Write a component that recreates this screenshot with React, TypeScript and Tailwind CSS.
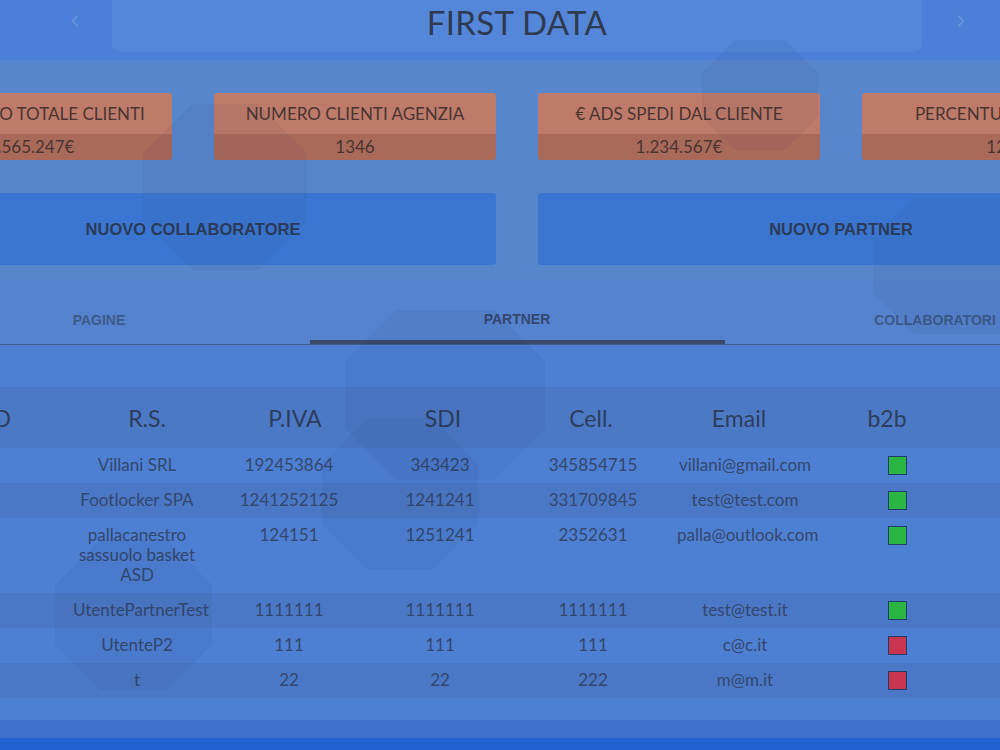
import { ChevronLeft, ChevronRight } from "lucide-react";

const STATS = [
  { label: "FATTURATO TOTALE CLIENTI", value: "4.565.247€" },
  { label: "NUMERO CLIENTI AGENZIA", value: "1346" },
  { label: "€ ADS SPEDI DAL CLIENTE", value: "1.234.567€" },
  { label: "PERCENTUALE MEDIA", value: "12%" },
];

const TABS = ["PAGINE", "PARTNER", "COLLABORATORI"];
const ACTIVE_TAB = 1;

const COLUMNS = ["ID", "R.S.", "P.IVA", "SDI", "Cell.", "Email", "b2b", ""];

const PARTNERS = [
  { id: 1, rs: "Villani SRL", piva: "192453864", sdi: "343423", cell: "345854715", email: "villani@gmail.com", b2b: true },
  { id: 2, rs: "Footlocker SPA", piva: "1241252125", sdi: "1241241", cell: "331709845", email: "test@test.com", b2b: true },
  { id: 3, rs: "pallacanestro sassuolo basket ASD", piva: "124151", sdi: "1251241", cell: "2352631", email: "palla@outlook.com", b2b: true },
  { id: 4, rs: "UtentePartnerTest", piva: "1111111", sdi: "1111111", cell: "1111111", email: "test@test.it", b2b: true },
  { id: 5, rs: "UtenteP2", piva: "111", sdi: "111", cell: "111", email: "c@c.it", b2b: false },
  { id: 6, rs: "t", piva: "22", sdi: "22", cell: "222", email: "m@m.it", b2b: false },
];

const SHAPES = [
  { x: 143, y: 104, w: 164, h: 166 },
  { x: 702, y: 40, w: 116, h: 110 },
  { x: 345, y: 310, w: 200, h: 170 },
  { x: 322, y: 418, w: 156, h: 152 },
  { x: 55, y: 540, w: 157, h: 150 },
  { x: 873, y: 198, w: 170, h: 136 },
];

function octagon({ x, y, w, h }: { x: number; y: number; w: number; h: number }) {
  const c = Math.min(w, h) * 0.3;
  return [
    [x + c, y],
    [x + w - c, y],
    [x + w, y + c],
    [x + w, y + h - c],
    [x + w - c, y + h],
    [x + c, y + h],
    [x, y + h - c],
    [x, y + c],
  ]
    .map((p) => p.join(","))
    .join(" ");
}

export default function App() {
  return (
    <div className="relative w-[1000px] h-[750px] overflow-hidden bg-[#4c7fd3] font-['Lato','Noto_Sans',sans-serif] text-[#32446a]">
      {/* top bar */}
      <div className="flex items-start h-[60px] bg-[#4b7fd8]">
        <div className="w-[112px] h-[42px] flex items-center justify-center pl-[38px]">
          <ChevronLeft size={20} strokeWidth={1.5} className="text-[#6f96dc]" />
        </div>
        <div className="w-[810px] h-[52px] rounded-b-lg bg-[#5487da] flex items-center justify-center">
          <h1 className="text-[33px] leading-none tracking-[0.3px] text-[#2f3a4f] -mt-[8px]">FIRST DATA</h1>
        </div>
        <div className="flex-1 h-[42px] flex items-center justify-center">
          <ChevronRight size={20} strokeWidth={1.5} className="text-[#6f96dc]" />
        </div>
      </div>

      <div className="w-[1254px] -ml-[110px]">
        {/* stats + actions */}
        <div className="bg-[#5886cc] pt-[33px] pb-[15px]">
          <div className="grid grid-cols-4 gap-[42px]">
            {STATS.map((s) => (
              <div key={s.label} className="rounded-[3px] overflow-hidden text-[17px] text-[#4a3532]">
                <div className="h-[41px] bg-[#be7b69] flex items-center justify-center">{s.label}</div>
                <div className="h-[26px] bg-[#a96a5a] flex items-center justify-center">{s.value}</div>
              </div>
            ))}
          </div>
          <div className="grid grid-cols-2 gap-[42px] mt-[33px]">
            {["NUOVO COLLABORATORE", "NUOVO PARTNER"].map((b) => (
              <button
                key={b}
                className="h-[72px] rounded-[3px] bg-[#3a76d1] font-['Liberation_Sans',Arial,sans-serif] font-bold text-[16.5px] text-[#2c3b58]"
              >
                {b}
              </button>
            ))}
          </div>
        </div>

        {/* tabs */}
        <div className="bg-[#5683cf] border-b border-[#3f5f92]">
          <div className="grid grid-cols-3">
            {TABS.map((t, i) => (
              <div key={t} className="flex flex-col items-center">
                <div
                  className={`h-[60px] flex items-end font-['Liberation_Sans',Arial,sans-serif] font-bold text-[14px] leading-[17px] ${
                    i === ACTIVE_TAB ? "text-[#33486e] pb-[12px]" : "text-[#3c5a88] pb-[11px]"
                  }`}
                >
                  {t}
                </div>
                <div className={`h-[4px] w-[415px] ${i === ACTIVE_TAB ? "bg-[#3a4a68]" : ""}`} />
              </div>
            ))}
          </div>
        </div>

        {/* partner table */}
        <div className="bg-[#4d7fd3] pt-[42px] pb-[22px] px-[35px]">
          <table className="w-full table-fixed border-collapse">
            <thead>
              <tr className="bg-[#4b79c6] h-[61px]">
                {COLUMNS.map((c, i) => (
                  <th key={i} className="w-[148px] font-normal text-[23px] text-[#2e3d5c] pt-[1px]">
                    {c}
                  </th>
                ))}
              </tr>
            </thead>
            <tbody className="text-[17px] leading-[20px] text-[#34476d]">
              {PARTNERS.map((p, i) => (
                <tr key={p.id} className={i % 2 === 1 ? "bg-[#4a78c6]" : ""}>
                  <td className="align-top text-center pt-[7px] pb-[8px] px-[4px]" />
                  <td className="align-top text-center pt-[7px] pb-[8px] pr-[20px] whitespace-normal">{p.rs}</td>
                  <td className="align-top text-center pt-[7px] pb-[8px] pr-[12px]">{p.piva}</td>
                  <td className="align-top text-center pt-[7px] pb-[8px] pr-[6px]">{p.sdi}</td>
                  <td className="align-top text-center pt-[7px] pb-[8px] pl-[4px]">{p.cell}</td>
                  <td className="align-top text-center pt-[7px] pb-[8px] pl-[12px] whitespace-nowrap">{p.email}</td>
                  <td className="align-top pt-[8px] pb-[8px] pl-[20px]">
                    <div
                      className={`mx-auto w-[19px] h-[19px] border border-[#1f3d6a] ${
                        p.b2b ? "bg-[#2bb543]" : "bg-[#c9344f]"
                      }`}
                    />
                  </td>
                  <td />
                </tr>
              ))}
            </tbody>
          </table>
        </div>
      </div>

      {/* footer bands */}
      <div className="h-[18px] bg-[#3e70cc]" />
      <div className="h-[20px] bg-[#2361d3]" />

      <svg className="absolute inset-0 pointer-events-none" width={1000} height={750}>
        {SHAPES.map((s, i) => (
          <polygon key={i} points={octagon(s)} fill="#1a2a50" fillOpacity={0.05} />
        ))}
      </svg>
    </div>
  );
}
